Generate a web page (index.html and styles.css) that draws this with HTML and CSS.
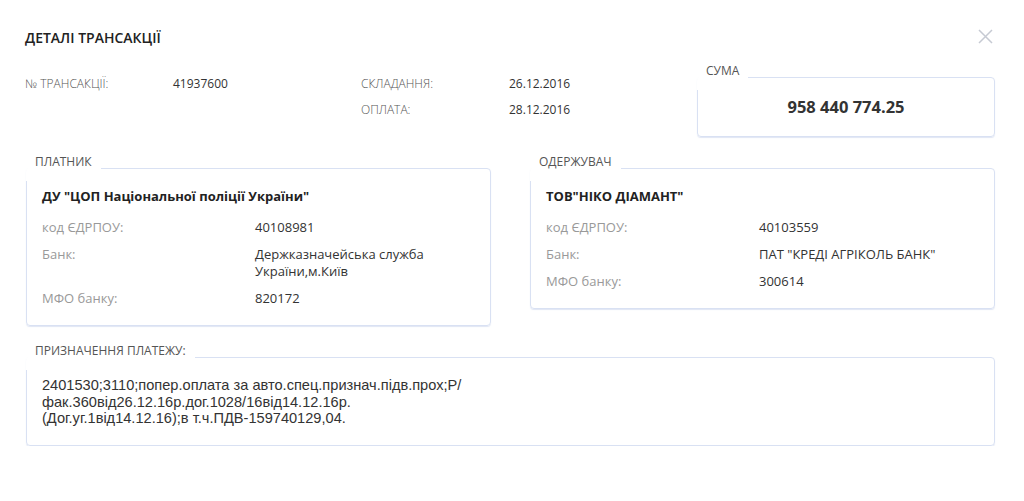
FILE: index.html
```html
<!DOCTYPE html>
<html lang="uk">
<head>
    <meta charset="UTF-8">
    <meta name="viewport" content="width=device-width, initial-scale=1.0">
    <title>Деталі трансакції</title>
    <link rel="stylesheet" href="styles.css">
</head>
<body>
    <div class="modal">
        <div class="modal-header">
            <h1>Деталі трансакції</h1>
            <button class="close" aria-label="Закрити">
                <svg width="15" height="15" viewBox="0 0 15 15">
                    <path d="M1 1L14 14M14 1L1 14" stroke="#c6cad3" stroke-width="1.5" fill="none"/>
                </svg>
            </button>
        </div>

        <div class="top-row">
            <div class="info">
                <span class="info-label">№ трансакції:</span>
                <span class="info-value">41937600</span>
                <span class="info-label">Складання:</span>
                <span class="info-value">26.12.2016</span>
                <span></span>
                <span></span>
                <span class="info-label">Оплата:</span>
                <span class="info-value">28.12.2016</span>
            </div>
            <fieldset class="box sum-box">
                <legend>Сума</legend>
                <div class="sum">958 440 774.25</div>
            </fieldset>
        </div>

        <div class="parties">
            <fieldset class="box">
                <legend>Платник</legend>
                <div class="party">
                    <div class="party-name">ДУ "ЦОП Національної поліції України"</div>
                    <div class="party-rows">
                        <span class="row-label">код ЄДРПОУ:</span>
                        <span class="row-value">40108981</span>
                        <span class="row-label">Банк:</span>
                        <span class="row-value">Держказначейська служба<br>України,м.Київ</span>
                        <span class="row-label">МФО банку:</span>
                        <span class="row-value">820172</span>
                    </div>
                </div>
            </fieldset>
            <fieldset class="box">
                <legend>Одержувач</legend>
                <div class="party">
                    <div class="party-name">ТОВ"НІКО ДІАМАНТ"</div>
                    <div class="party-rows">
                        <span class="row-label">код ЄДРПОУ:</span>
                        <span class="row-value">40103559</span>
                        <span class="row-label">Банк:</span>
                        <span class="row-value">ПАТ "КРЕДІ АГРІКОЛЬ БАНК"</span>
                        <span class="row-label">МФО банку:</span>
                        <span class="row-value">300614</span>
                    </div>
                </div>
            </fieldset>
        </div>

        <fieldset class="box purpose-box">
            <legend>Призначення платежу:</legend>
            <div class="purpose">2401530;3110;попер.оплата за авто.спец.признач.підв.прох;Р/<br>фак.360від26.12.16р.дог.1028/16від14.12.16р.<br>(Дог.уг.1від14.12.16);в т.ч.ПДВ-159740129,04.</div>
        </fieldset>
    </div>
</body>
</html>
```

FILE: styles.css
```css
body {
    margin: 0;
    font-family: "Open Sans", Arial, sans-serif;
    color: #333;
    background: #fff;
}
.modal {
    padding: 0 29px 0 25px;
}
.modal-header {
    display: flex;
    justify-content: space-between;
    align-items: flex-start;
    padding-top: 29px;
    height: 64px;
    box-sizing: border-box;
}
.modal-header h1 {
    margin: 0;
    font-size: 14px;
    line-height: 18px;
    font-weight: 600;
    text-transform: uppercase;
    color: #222;
}
.close {
    border: none;
    background: none;
    padding: 0;
    margin-right: 2px;
    cursor: pointer;
    line-height: 0;
}
.top-row {
    display: grid;
    grid-template-columns: 1fr 298px;
    align-items: start;
}
.info {
    margin-top: 12px;
    display: grid;
    grid-template-columns: 148px 188px 148px auto;
    row-gap: 10px;
    font-size: 12px;
    line-height: 16px;
}
.info-label {
    color: #555;
    font-weight: 300;
    text-transform: uppercase;
}
.info-value {
    color: #333;
}
.box {
    margin: 0;
    padding: 0 15px;
    min-width: 0;
    border: 1px solid #d9e1f3;
    border-radius: 4px;
    box-shadow: 0 1px 1px rgba(205, 214, 236, 0.6);
}
.box legend {
    margin-left: -16px;
    padding: 0 9px 12px;
    font-size: 12px;
    line-height: 14px;
    color: #555;
    font-weight: 400;
    text-transform: uppercase;
}
.sum {
    padding: 7px 0 19px;
    text-align: center;
    font-size: 16.5px;
    line-height: 20px;
    font-weight: 700;
    color: #333;
}
.parties {
    margin-top: 18px;
    margin-left: 1px;
    display: grid;
    grid-template-columns: 1fr 1fr;
    column-gap: 39px;
    align-items: start;
}
.party {
    padding: 6px 0 18px;
}
.party-name {
    font-size: 13px;
    line-height: 18px;
    font-weight: 700;
    color: #222;
}
.party-rows {
    margin-top: 14px;
    display: grid;
    grid-template-columns: 213px 1fr;
    row-gap: 10px;
    font-size: 13px;
    line-height: 17px;
}
.row-label {
    color: #999;
}
.row-value {
    color: #333;
}
.purpose-box {
    margin-top: 18px;
    margin-left: 1px;
}
.purpose {
    padding: 7px 0 18px;
    font-family: "Liberation Sans", Arial, sans-serif;
    font-size: 14.6px;
    line-height: 16.5px;
    color: #333;
}
```
